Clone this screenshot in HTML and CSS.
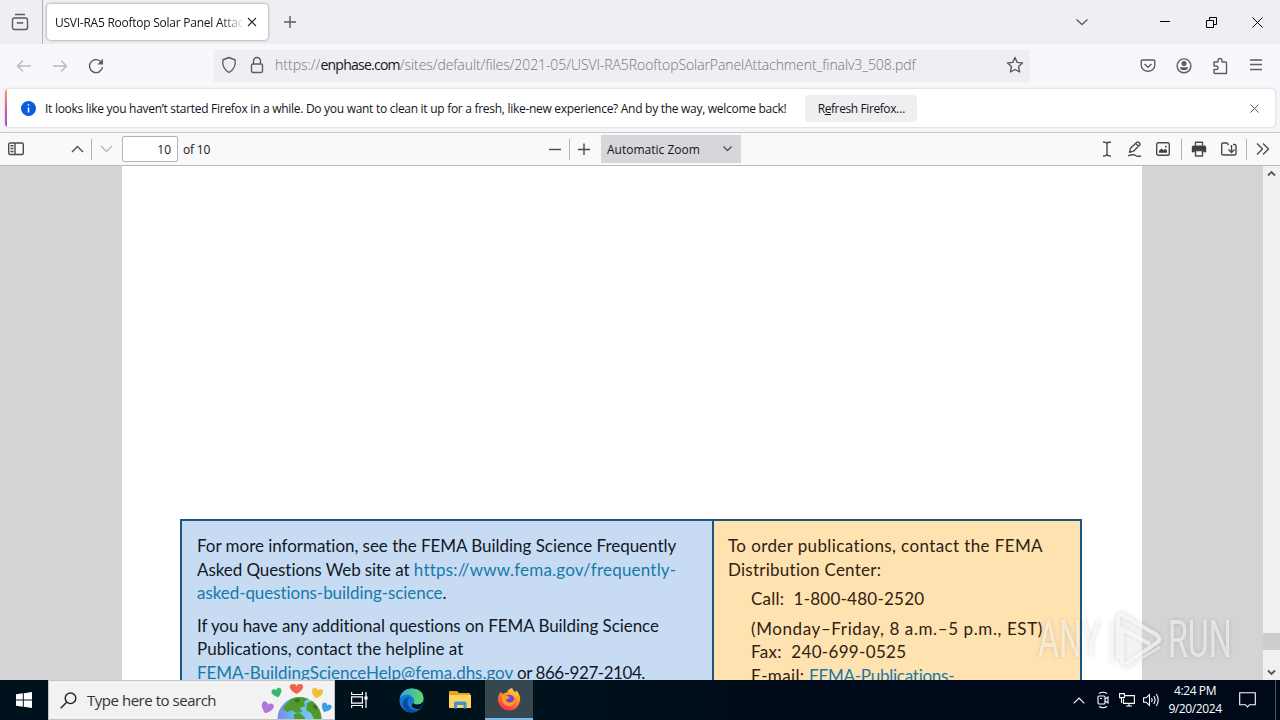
FILE: index.html
```html
<!DOCTYPE html>
<html lang="en">
<head>
<meta charset="utf-8">
<title>USVI-RA5 Rooftop Solar Panel Attachment</title>
<link rel="stylesheet" href="styles.css">
</head>
<body>
<div class="screen">
  <header class="tabs">
    <div class="firefox-view"><svg class="ico" width="18" height="18" viewBox="0 0 18 18"><path d="M4 1.5h10M3.500 5h11q2 0 2 2v7.500a2 2 0 0 1-2 2h-11a2 2 0 0 1-2-2V7q0-2 2-2zM6.500 9v1h5V9"/></svg></div>
    <div class="tab"><span class="tab-title">USVI-RA5 Rooftop Solar Panel Attac</span><svg class="ico dark" width="10" height="10" viewBox="0 0 10 10"><path d="M1 1l8 8M9 1L1 9"/></svg></div>
    <div class="new-tab"><svg class="ico" width="14" height="14" viewBox="0 0 14 14"><path d="M7 1v12M1 7h12"/></svg></div>
    <div class="tab-list"><svg class="ico" width="14" height="8" viewBox="0 0 14 8"><path d="M1.500 1.500L7 6.500l5.500-5"/></svg></div>
    <div class="win"><svg class="ico black" width="10" height="10" viewBox="0 0 10 10"><path d="M0 4.500h10"/></svg></div>
    <div class="win"><svg class="ico black" width="11" height="11" viewBox="0 0 11 11"><path d="M.5 3.500h7v7h-7zM3.500 3.500v-3h7v7h-3"/></svg></div>
    <div class="win"><svg class="ico black thin" width="11" height="11" viewBox="0 0 11 11"><path d="M.5.5l10 10M10.500.5l-10 10"/></svg></div>
  </header>

  <nav class="nav">
    <div class="nav-btn"><svg class="ico pale" width="16" height="14" viewBox="0 0 16 14"><path d="M15 7H1.500M7 1.500L1.500 7 7 12.500"/></svg></div>
    <div class="nav-btn"><svg class="ico pale" width="16" height="14" viewBox="0 0 16 14"><path d="M1 7h13.500M9 1.500L14.500 7 9 12.500"/></svg></div>
    <div class="nav-btn"><svg class="ico" width="16" height="16" viewBox="0 0 16 16"><path d="M13.500 4.500A6.500 6.500 0 1 0 14.500 9"/><path class="solid" d="M15 .8v5.700H9.300z"/></svg></div>
    <div class="urlbar">
      <svg class="ico" width="16" height="18" viewBox="0 0 16 18"><path d="M8 1.500Q11 3 14 3.700C15 9 12.500 14 8 16.500 3.500 14 1 9 2 3.700 5 3 8 1.500 8 1.500z"/></svg>
      <svg class="ico lock" width="14" height="18" viewBox="0 0 14 18"><rect x="1.500" y="8" width="11" height="8.500" rx="1.500"/><path d="M3.500 8V5a3.500 3.500 0 0 1 7 0v3"/></svg>
      <span class="url"><span class="u1">https://</span><b class="u2">enphase.com</b><span class="u3">/sites/default/files/2021-05/USVI-RA5RooftopSolarPanelAttachment_finalv3_508.pdf</span></span>
      <svg class="ico star" width="18" height="18" viewBox="0 0 18 18"><path d="M9 1.500l2.200 4.900 5.300.6-3.900 3.600 1 5.400L9 13.500 4.400 16l1-5.400L1.500 7l5.300-.6z"/></svg>
    </div>
    <div class="nav-tools">
      <div class="nav-btn"><svg class="ico" width="16" height="16" viewBox="0 0 16 16"><path d="M2.500 2h11q1.300 0 1.300 1.300V7a6.800 6.300 0 0 1-13.600 0V3.300Q1.200 2 2.500 2zM4.500 6L8 9.200 11.500 6"/></svg></div>
      <div class="nav-btn"><svg class="ico" width="16" height="16" viewBox="0 0 16 16"><circle cx="8" cy="7.800" r="6.900"/><circle class="solid" cx="8" cy="5.600" r="2.500"/><path class="solid" d="M4 9.300h8q0 3-4 3t-4-3z"/></svg></div>
      <div class="nav-btn"><svg class="ico" width="16" height="18" viewBox="0 0 16 18"><path d="M2 5h4V3.500q0-2 2-2t2 2V5h3.500q1 0 1 1v10.500H3q-1 0-1-1v-3h2q2 0 2-1.700T4 9H2z"/></svg></div>
      <div class="nav-btn"><svg class="ico" width="14" height="13" viewBox="0 0 14 13"><path d="M1 1h12M1 5.500h12M1 10.500h12"/></svg></div>
    </div>
  </nav>

  <div class="notice-wrap">
    <div class="notice">
      <svg width="15" height="15" viewBox="0 0 15 15"><circle cx="7.500" cy="7.500" r="7.500" fill="#0a5be0"/><path d="M7.500 6.500v5M7.500 3.300v1.500" stroke="#fff" stroke-width="1.500"/></svg>
      <span class="notice-text">It looks like you haven’t started Firefox in a while. Do you want to clean it up for a fresh, like-new experience? And by the way, welcome back!</span>
      <button class="refresh">R<u>e</u>fresh Firefox…</button>
      <svg class="ico close" width="9" height="9" viewBox="0 0 9 9"><path d="M.5.5l8 8M8.500.5l-8 8"/></svg>
    </div>
  </div>

  <div class="pdfbar">
    <div class="pb side"><svg class="ico" width="16" height="14" viewBox="0 0 16 14"><rect x=".7" y="1" width="14.600" height="11.500" rx="1.500"/><path d="M7 1v11.500M2.500 3.800h3M2.500 6.500h3M2.500 9.500h3"/></svg></div>
    <div class="pb up"><svg class="ico" width="13" height="8" viewBox="0 0 13 8"><path d="M1 7l5.500-5.500L12 7"/></svg></div>
    <i class="sep"></i>
    <div class="pb down"><svg class="ico pale" width="13" height="8" viewBox="0 0 13 8"><path d="M1 1l5.500 5.500L12 1"/></svg></div>
    <div class="page-no">10</div>
    <span class="of">of 10</span>
    <div class="pb minus"><svg class="ico" width="12" height="12" viewBox="0 0 12 12"><path d="M0 6.500h12"/></svg></div>
    <i class="sep"></i>
    <div class="pb plus"><svg class="ico" width="12" height="12" viewBox="0 0 12 12"><path d="M0 6.500h12M6 .5v12"/></svg></div>
    <div class="zoom"><span>Automatic Zoom</span><svg class="ico dark" width="9" height="6" viewBox="0 0 9 6"><path d="M.5.5l4 4 4-4"/></svg></div>
    <div class="pb-right">
      <div class="pb"><svg class="ico" width="10" height="16" viewBox="0 0 10 16"><path d="M1 1q4 0 4 2 0-2 4-2M5 3v10M1 15q4 0 4-2 0 2 4 2"/></svg></div>
      <div class="pb"><svg class="ico" width="16" height="16" viewBox="0 0 16 16"><path d="M2.500 11.300l1-4 6.300-6q1-.8 2.400.4t.5 2.400L6.500 10.200zM8.700 2.500l2.700 2.700M1 14.800q3-1.300 5-1t3 1 5 .2"/></svg></div>
      <div class="pb"><svg class="ico" width="14" height="14" viewBox="0 0 14 14"><rect x=".7" y=".7" width="12.600" height="12.600" rx="1.500"/><path class="solid" d="M3 10.800V8.800l2.500-2.300 2 1.800 1.700-1.500L11 8.500v2.300z"/><circle class="solid" cx="9.800" cy="4.700" r=".9"/></svg></div>
      <i class="sep"></i>
      <div class="pb print"><svg class="ico" width="16" height="16" viewBox="0 0 16 16"><path class="solid" d="M2.500 4.500h11q1.700 0 1.700 1.700v5h-3V9.500H3.800v1.700h-3v-5q0-1.700 1.700-1.700z"/><path d="M4.500 4.500V1.300h7v3.200M4.500 9.500h7V15h-7z"/></svg></div>
      <div class="pb save"><svg class="ico" width="16" height="14" viewBox="0 0 16 14"><path d="M6.500 13H2.200Q.7 13 .7 11.700V2.300Q.7 1 2 1h4l1.500 2M10.500 3v7M7.500 7.500l3 3 3-3M12 2.500h1.500q1.500 0 1.500 1.500v7.500q0 1.500-1.500 1.500h-7"/></svg></div>
      <i class="sep"></i>
      <div class="pb more"><svg class="ico" width="14" height="12" viewBox="0 0 14 12"><path d="M1 .5L6.500 6 1 11.500M7 .5L12.500 6 7 11.500"/></svg></div>
    </div>
  </div>

  <main class="viewer">
    <section class="page">
      <div class="boxes">
        <div class="box blue">
          <p><span class="ln l1">For more information, see the FEMA Building Science Frequently</span><span class="ln l2">Asked Questions Web site at <a>https://www.fema.gov/frequently-</a></span><span class="ln l3"><a>asked-questions-building-science</a>.</span></p>
          <p><span class="ln l4">If you have any additional questions on FEMA Building Science</span><span class="ln l5">Publications, contact the helpline at</span><span class="ln l6"><a>FEMA-BuildingScienceHelp@fema.dhs.gov</a> or 866-927-2104.</span></p>
        </div>
        <div class="box sand">
          <p><span class="ln r1">To order publications, contact the FEMA</span><span class="ln r2">Distribution Center:</span></p>
          <p class="ind call"><span class="ln r3">Call:&nbsp; 1-800-480-2520</span></p>
          <p class="ind"><span class="ln r4">(Monday–Friday, 8 a.m.–5 p.m., EST)</span><span class="ln r5">Fax:&nbsp; 240-699-0525</span><span class="ln r6">E-mail: <a>FEMA-Publications-</a></span></p>
        </div>
      </div>
    </section>
    <div class="scroll">
      <svg width="9" height="7" viewBox="0 0 9 7"><path d="M1 5.500L4.500 2 8 5.500"/></svg>
      <i class="thumb"></i>
      <svg width="9" height="7" viewBox="0 0 9 7"><path d="M1 1.500L4.500 5 8 1.500"/></svg>
    </div>
    <div class="watermark">
      <span class="wm">ANY</span>
      <svg width="60" height="66" viewBox="0 0 60 66"><path d="M13 52V11q0-5 5-3l34 20q5 4 0 8L22 56q-5 3-5-3V22l28 15" fill="#fff" fill-opacity=".25" stroke="#fff" stroke-opacity=".65" stroke-width="4"/><path d="M7 56V14M20 61l35-21" fill="none" stroke="#fff" stroke-opacity=".5" stroke-width="3"/></svg>
      <span class="wm">RUN</span>
    </div>
  </main>

  <footer class="taskbar">
    <div class="start"><svg width="16" height="16" viewBox="0 0 16 16"><path fill="#fff" d="M0 2.300L6.800 1.300V7.500H0zM7.800 1.200L16 0v7.500H7.800zM0 8.500h6.800v6.200L0 13.700zM7.800 8.500H16V16l-8.200-1.200z"/></svg></div>
    <div class="search">
      <svg width="17" height="17" viewBox="0 0 17 17" fill="none" stroke="#222" stroke-width="1.400"><circle cx="10.500" cy="6.300" r="5.300"/><path d="M6.700 10.200L.7 16.200"/></svg>
      <span>Type here to search</span>
      <svg class="earth" width="76" height="38" viewBox="-3 0 76 38">
        <defs><linearGradient id="sea" x1="0" x2="1"><stop offset="0" stop-color="#8087e8"/><stop offset=".35" stop-color="#62b8ee"/><stop offset="1" stop-color="#86cdf0"/></linearGradient><clipPath id="globe"><circle cx="38.500" cy="38" r="22"/></clipPath>
        <path id="heart" d="M0 5C-8 0-6-6-2.500-5Q-.5-5 0-3Q.5-5 2.500-5C6-6 8 0 0 5z"/></defs>
        <circle cx="38.500" cy="38" r="22" fill="url(#sea)"/>
        <g clip-path="url(#globe)" fill="#4f9a2a"><path d="M24 24l8-8 10-1 6 2-5 4 1 4-5 2 2 4-6 1-4-3-5 2-4-3z"/><path d="M46 22l7-3 8 10v9h-8l-3-6-5-3zM33 33l6-1 5 5v2H33z"/><path fill="#376f2b" d="M33 19l5-2 1 3-4 2zM52 23l4 2v4l-4-2z"/></g>
        <use href="#heart" transform="translate(35.500 8) scale(1.200 1)" fill="#f0644f"/>
        <use href="#heart" transform="translate(16 12) rotate(-15) scale(.9)" fill="#35b86b"/>
        <use href="#heart" transform="translate(56 12.500) rotate(15)" fill="#f8bd37"/>
        <use href="#heart" transform="translate(6 27) rotate(20) scale(1.100)" fill="#b178dc"/>
        <use href="#heart" transform="translate(65 27) rotate(25) scale(.9)" fill="#3ca0e0"/>
      </svg>
    </div>
    <div class="task view"><svg width="17" height="16" viewBox="0 0 17 16" fill="none" stroke="#fff" stroke-width="1.200"><path d="M.6 0v2.500h10.800V0M.6 16v-2.500h10.800V16M.6 4.800h10.800v6.400H.6zM15 0v16"/><path fill="#fff" d="M14 5h2v2h-2z"/></svg></div>
    <div class="task edge"><svg width="25" height="25" viewBox="0 0 25 25"><defs><linearGradient id="eg" x1="0" x2="1"><stop offset="0" stop-color="#2aa5dc"/><stop offset="1" stop-color="#63d967"/></linearGradient></defs><circle cx="12.500" cy="12.500" r="12" fill="#1477cf"/><path d="M.8 10Q3 .5 13 .5 24.500 1 24.500 11q-.5 5.500-6 5.500-4 0-4-1.800 1.300-1.200.5-3.500Q12 6 6.500 7 3 7.500.8 10z" fill="url(#eg)"/><path d="M10.500 9.500Q7 13 9.500 18q3.500 6 11 3.500-4.500 4-10 2.800Q3 22 4 14q1.500-4.500 6.500-4.500z" fill="#0c4a9b"/><path d="M14.500 14.700q0 1.800 4 1.800 4 0 6-4-.5 5-3.200 7.800-4 1.700-7.500-.8-2-2 .7-4.800z" fill="#00141e"/></svg></div>
    <div class="task folder"><svg width="22" height="20" viewBox="0 0 22 20"><path d="M0 2q0-1 1-1h7l2 2h11v14H0z" fill="#e5a12c"/><path d="M0 5h22v13H0z" fill="#ffd45e"/><path d="M5 18.500V13q0-1.500 1.500-1.500h9.500q1.500 0 1.500 1.500v5.500h-3V15H8v3.500z" fill="#3f93d2"/></svg></div>
    <div class="task active"><svg width="24" height="25" viewBox="0 0 24 25"><defs><linearGradient id="fx" x1=".8" y1="0" x2=".3" y2="1"><stop offset="0" stop-color="#ffe143"/><stop offset=".45" stop-color="#ff8b24"/><stop offset="1" stop-color="#f52458"/></linearGradient></defs><path d="M3.500 5l2 2Q8 5 10 5.500 11 2 15 1q1 3 3.500 4l1-1.500Q24 9 23 14q-2 9.500-11 9.500T1 14q-.5-5 2.500-9z" fill="url(#fx)"/><circle cx="12.300" cy="13" r="5.300" fill="#7540d5"/><path d="M5 9q3-1.500 5 0l3 1q-1 2-4 2.500.5 3.500 4.500 3 3.500-1 3.500-4.500Q19 15 16 18q-5 3-9-1-3-4-2-8z" fill="#ff9a24"/></svg></div>
    <div class="tray">
      <svg class="t1" width="12" height="7" viewBox="0 0 12 7"><path d="M.7 6.300L6 1l5.300 5.300"/></svg>
      <svg class="t2" width="12" height="18" viewBox="0 0 12 18"><path d="M2 2.500Q6 0 10 2.500M2 15.500q4 2.500 8 0"/><rect x="1" y="5" width="7" height="8" rx="1"/><path d="M8 8l3-2v6l-3-2M3 7.500h2"/></svg>
      <svg class="t3" width="16" height="14" viewBox="0 0 16 14"><path d="M5 2.600h10.400v7.800H4.500V6M7 13h6M10 10.500V13M.6.6h4.800v4H.6zM2.500 4.600V10"/></svg>
      <svg class="t4" width="17" height="14" viewBox="0 0 17 14"><path d="M.6 4.800h2.600L6.500 1.500v11L3.200 9.200H.6zM8.500 5q1.300 2 0 4M10.800 3q2.500 4 0 8M13.300 1q3.800 6 0 12"/></svg>
      <div class="clock"><span>4:24 PM</span><span>9/20/2024</span></div>
      <svg class="t5" width="17" height="16" viewBox="0 0 17 16"><path d="M.7.7h15.600v12H10.500L8.500 15l-2-2.300H.7z"/></svg>
      <i class="peek"></i>
    </div>
  </footer>
</div>
</body>
</html>
```
FILE: styles.css
```css
* { box-sizing: border-box; }
body { margin: 0; font-family: "Open Sans", "Noto Sans", sans-serif; font-size: 12px; color: #15141a; }
p { margin: 0; }
svg { display: block; flex: none; }
.screen { width: 1280px; height: 720px; overflow: hidden; display: flex; flex-direction: column; }
.ico { fill: none; stroke: #5b5b66; stroke-width: 1.4; stroke-linejoin: round; }
.ico .solid { fill: #5b5b66; stroke: none; }
.ico.dark { stroke: #2b2a33; stroke-width: 1.2; }
.ico.black { stroke: #000; stroke-width: 1; stroke-linejoin: miter; }
.ico.pale { stroke: #b9b9bf; }

.tabs { flex: none; height: 44px; background: #eeeef3; display: flex; align-items: center; }
.firefox-view { width: 43px; height: 44px; padding-left: 11px; border-right: 1px solid #b4b4bb; display: flex; align-items: center; }
.tab { width: 221px; height: 36px; margin-left: 4px; padding: 0 11px 0 8px; border-radius: 4px; background: #fff; box-shadow: 0 0 3px rgba(0,0,0,.45); display: flex; align-items: center; justify-content: space-between; }
.tab-title { width: 188px; overflow: hidden; white-space: nowrap; font-size: 12px; letter-spacing: -.25px; -webkit-mask-image: linear-gradient(90deg, #000 165px, transparent 190px); }
.new-tab { margin-left: 15px; }
.tab-list { margin-left: auto; width: 60px; }
.win { width: 46px; height: 44px; display: flex; align-items: center; justify-content: center; }
.tab-list + .win { margin-left: 7px; }

.nav { flex: none; height: 43px; padding: 0 6px; background: #f8f8fc; display: flex; align-items: center; }
.nav-btn { width: 36px; height: 32px; display: flex; align-items: center; justify-content: center; }
.urlbar { width: 816px; height: 32px; margin-left: 100px; padding: 0 6px 2px 7px; background: #eeeef3; display: flex; align-items: center; }
.lock { margin-left: 13px; }
.url { margin-left: 11px; font-size: 14px; white-space: nowrap; color: #77767f; font-weight: 300; }
.u2 { color: #15141a; font-weight: 400; letter-spacing: -.75px; }
.u3 { letter-spacing: -.08px; }
.star { margin-left: auto; }
.nav-tools { margin-left: auto; display: flex; }

.notice-wrap { flex: none; height: 46px; padding: 2px 5px 5px; background: #f5f5f7; border-bottom: 1px solid #c8c8c8; }
.notice { height: 38px; padding: 0 16px; border-radius: 4px; background: linear-gradient(#ff9a5a, #e255a1 50%, #9059d6) 0 0 / 2px 100% no-repeat #fff; box-shadow: 0 0 2px rgba(0,0,0,.25); display: flex; align-items: center; }
.notice-text { margin-left: 9px; white-space: nowrap; letter-spacing: -.287px; }
.refresh { width: 112px; height: 27px; margin: 0 0 0 19px; padding: 0; border: 0; border-radius: 4px; background: #efeff2; font: inherit; letter-spacing: -.4px; color: inherit; }
.close { margin-left: auto; stroke-width: 1; }

.pdfbar { flex: none; height: 33px; background: #f9f9fa; border-bottom: 1px solid #b8b8b8; display: flex; align-items: center; }
.pdfbar .ico:not(.pale) { stroke: #4a4a50; }
.pdfbar .solid { fill: #3f3f45; }
.pb { width: 28px; height: 28px; display: flex; align-items: center; justify-content: center; }
.side { margin-left: 2px; }
.up { margin-left: 33px; }
.sep { width: 1px; height: 21px; background: #b4b4b8; }
.page-no { width: 56px; height: 26px; margin-left: 2px; padding-right: 6px; border: 1px solid #b4b4b8; border-radius: 2px; background: #fff; display: flex; align-items: center; justify-content: flex-end; }
.of { width: 60px; margin-left: 5px; letter-spacing: -.2px; }
.minus { margin-left: 298px; }
.zoom { width: 140px; height: 28px; margin-left: 3px; padding: 0 9px 0 6px; background: #d7d7db; display: flex; align-items: center; justify-content: space-between; }
.pb-right { margin-left: auto; display: flex; align-items: center; }
.pb-right .sep { margin-left: 4px; }
.print { margin-left: 3px; }
.save { margin-left: 2px; }
.save + .sep { margin-left: 3px; }
.more { margin: 0 3px 0 2px; }

.viewer { position: relative; flex: none; height: 514px; background: #d4d4d7; display: flex; }
.page { width: 1020px; margin-left: 122px; background: #fff; padding: 353px 60px 0 58px; overflow: hidden; }
.boxes { display: flex; height: 200px; border: 2px solid #1f5680; }
.box { font-family: Lato, "Open Sans", sans-serif; font-size: 17px; line-height: 23.5px; font-variant-ligatures: none; }
.ln { display: block; white-space: nowrap; }
.box a { color: #1779a8; }
.blue { width: 532px; padding: 13px 0 0 15px; border-right: 2px solid #1f5680; background: #c7dcf3; color: #111827; }
.blue p + p { margin-top: 9px; }
.sand { flex: 1; padding: 13px 0 0 14px; background: #fee2af; color: #2f2113; }
.l1 { letter-spacing: -.03px; }
.l2 { letter-spacing: -.08px; }
.l2 a { letter-spacing: .2px; }
.l3, .l4 { letter-spacing: -.06px; }
.l5 { letter-spacing: .04px; }
.l6 { letter-spacing: -.45px; }
.l6 a { letter-spacing: -.04px; }
.r1 { letter-spacing: .39px; }
.r2, .r3 { letter-spacing: .25px; }
.r4 { letter-spacing: .6px; }
.r5 { letter-spacing: .33px; }
.r6 { letter-spacing: .35px; }
.r6 a { letter-spacing: -.25px; }
.ind { padding-left: 23px; }
.call { margin: 6px 0; }
.scroll { width: 17px; margin-left: auto; padding: 4px 0; background: #f0f0f0; display: flex; flex-direction: column; align-items: center; }
.scroll svg { fill: none; stroke: #555; stroke-width: 1.8; }
.thumb { width: 17px; height: 17px; margin: auto 0 19px; background: #cdcdcd; }
.watermark { position: absolute; left: 1038px; top: 441px; display: flex; align-items: center; filter: drop-shadow(0 0 2px rgba(0,0,0,.25)); }
.wm { width: 63px; font-family: Roboto, sans-serif; font-size: 52px; line-height: 66px; font-weight: 400; color: rgba(255,255,255,.55); transform: scaleX(.62); transform-origin: 0 50%; }
.watermark svg { margin: 0 3px 0 4px; }

.taskbar { flex: none; height: 40px; background: #00121c; display: flex; }
.start { width: 48px; display: flex; align-items: center; justify-content: center; }
.search { width: 287px; height: 40px; padding-left: 11px; border: 1px solid #c4c4c4; background: #f2f2f2; color: #333; font-size: 15px; display: flex; align-items: center; }
.search span { margin-left: 10px; white-space: nowrap; letter-spacing: -.47px; }
.earth { margin-left: auto; }
.task { width: 49px; height: 40px; display: flex; align-items: center; justify-content: center; }
.edge { margin-left: 3px; }
.folder { width: 48px; }
.active { width: 48px; margin-left: 1px; background: #37474f; border-bottom: 2px solid #76b9ed; }
.tray { flex: 1; background: linear-gradient(90deg, #00121c, #000919 40%); display: flex; align-items: center; color: #fff; }
.tray svg { fill: none; stroke: #fff; stroke-width: 1.1; }
.t1 { margin-left: 540px; }
.t2 { margin-left: 12px; }
.t3 { margin-left: 10px; }
.t4 { margin-left: 8px; }
.clock { width: 70px; display: flex; flex-direction: column; align-items: center; line-height: 18px; font-size: 12px; letter-spacing: -.4px; }
.t5 { margin-left: 9px; }
.peek { width: 1px; height: 40px; margin-left: auto; margin-right: 4px; background: #4a5564; }
```
